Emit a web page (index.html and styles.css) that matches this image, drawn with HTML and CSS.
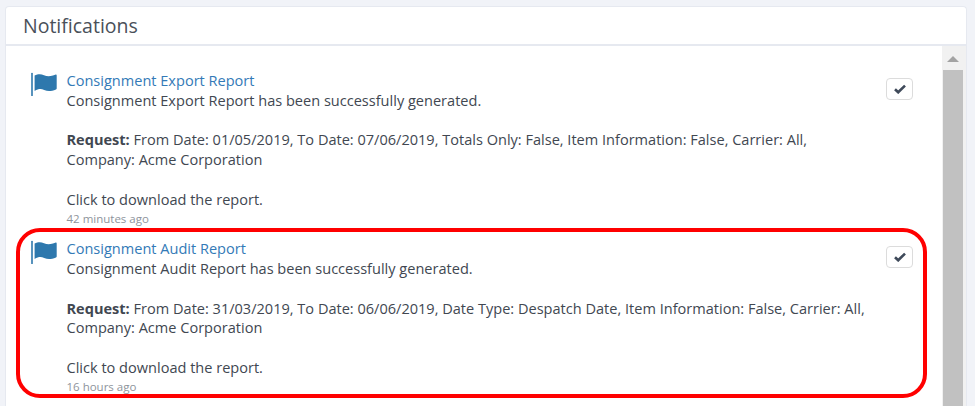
FILE: index.html
```html
<!DOCTYPE html>
<html lang="en">
<head>
    <meta charset="UTF-8">
    <title>Notifications</title>
    <link rel="stylesheet" href="styles.css">
</head>
<body>
    <div class="panel">
        <div class="panel-header">
            <h1>Notifications</h1>
        </div>
        <div class="panel-body">
            <div class="list">
                <div class="notification">
                    <svg class="flag" viewBox="0 0 28 24"><path d="M1 1.5v22" stroke="#2e78ad" stroke-width="1.6" stroke-linecap="round"/><path d="M3.600 3.600C7 1.800 10 1.900 13 3.200s6.500 1.600 11.800-.6c.6-.1.9.2.9.8v13.200c0 .5-.2.7-.7.9-5 2-8.500 1.900-11.800.5S7.400 16.800 3.600 19z" fill="#2e78ad"/></svg>
                    <div class="content">
                        <a class="title">Consignment Export Report</a>
                        <p>Consignment Export Report has been successfully generated.</p>
                        <p class="gap"><b>Request:</b> From Date: 01/05/2019, To Date: 07/06/2019, Totals Only: False, Item Information: False, Carrier: All, Company: Acme Corporation</p>
                        <p class="gap">Click to download the report.</p>
                        <div class="time">42 minutes ago</div>
                    </div>
                    <button class="check"><svg viewBox="0 0 12 10"><path d="M1 5.200l3.200 3.100L11 1.600" fill="none" stroke="#3f4a5a" stroke-width="2.600"/></svg></button>
                </div>
                <div class="notification highlighted">
                    <svg class="flag" viewBox="0 0 28 24"><path d="M1 1.5v22" stroke="#2e78ad" stroke-width="1.6" stroke-linecap="round"/><path d="M3.600 3.600C7 1.800 10 1.900 13 3.200s6.500 1.600 11.800-.6c.6-.1.9.2.9.8v13.200c0 .5-.2.7-.7.9-5 2-8.500 1.900-11.800.5S7.400 16.800 3.600 19z" fill="#2e78ad"/></svg>
                    <div class="content">
                        <a class="title">Consignment Audit Report</a>
                        <p>Consignment Audit Report has been successfully generated.</p>
                        <p class="gap"><b>Request:</b> From Date: 31/03/2019, To Date: 06/06/2019, Date Type: Despatch Date, Item Information: False, Carrier: All, Company: Acme Corporation</p>
                        <p class="gap">Click to download the report.</p>
                        <div class="time">16 hours ago</div>
                    </div>
                    <button class="check"><svg viewBox="0 0 12 10"><path d="M1 5.200l3.200 3.100L11 1.600" fill="none" stroke="#3f4a5a" stroke-width="2.600"/></svg></button>
                </div>
            </div>
            <div class="scrollbar">
                <div class="arrow"></div>
                <div class="thumb"></div>
            </div>
        </div>
    </div>
</body>
</html>
```

FILE: styles.css
```css
html, body {
    height: 100%;
}

body {
    margin: 0;
    padding: 6px 8px 0 5px;
    box-sizing: border-box;
    overflow: hidden;
    background-color: #f1f3f8;
    font-family: 'Open Sans', sans-serif;
    font-size: 14.56px;
    line-height: 19.75px;
    color: #414751;
}

.panel {
    height: 100%;
    box-sizing: border-box;
    overflow: hidden;
    background-color: #fff;
    border: 1px solid #e6e9f0;
    border-bottom: none;
    border-radius: 4px 4px 0 0;
    display: flex;
    flex-direction: column;
}

.panel-header {
    flex: none;
    height: 36px;
    padding: 1px 0 0 17px;
    border-bottom: 2px solid #e6e9f0;
    display: flex;
    align-items: center;
}

h1 {
    margin: 0;
    font-size: 19.5px;
    font-weight: 400;
    color: #4a5059;
}

.panel-body {
    flex: 1;
    min-height: 0;
    display: flex;
}

.list {
    flex: 1;
    padding-top: 25px;
    display: flex;
    flex-direction: column;
    gap: 12.5px;
}

.notification {
    position: relative;
    padding-left: 25px;
    display: flex;
}

.flag {
    flex: none;
    width: 28px;
    height: 24px;
    margin-top: 1px;
}

.content {
    flex: 1;
    margin-left: 7.5px;
}

.title {
    display: block;
    color: #337ab7;
}

p {
    margin: 0;
    max-width: 800px;
}

.gap {
    margin-top: 19.75px;
}

.time {
    margin-top: 0.5px;
    font-size: 11.5px;
    line-height: 17px;
    color: #8e949c;
}

.check {
    flex: none;
    align-self: flex-start;
    width: 27px;
    height: 22px;
    margin: 7px 29px 0 1px;
    padding: 0;
    background-color: #fff;
    border: 1px solid #dcdcdc;
    border-radius: 4px;
    display: flex;
    align-items: center;
    justify-content: center;
}

.check svg {
    width: 12px;
    height: 10px;
}

/* red marker round the second notification */
.highlighted::after {
    content: '';
    position: absolute;
    left: 10px;
    top: -11px;
    width: 903px;
    height: 162px;
    border: 4px solid #ff0000;
    border-radius: 24px;
    pointer-events: none;
}

.scrollbar {
    flex: none;
    width: 24px;
    padding: 0 3px 0 1px;
    box-sizing: border-box;
    background-color: #f1f1f1;
}

.arrow {
    width: 0;
    height: 0;
    margin: 10px auto 8px;
    border-left: 6px solid transparent;
    border-right: 6px solid transparent;
    border-bottom: 6px solid #a3a3a3;
}

.thumb {
    height: 340px;
    background-color: #c1c1c1;
}
```
